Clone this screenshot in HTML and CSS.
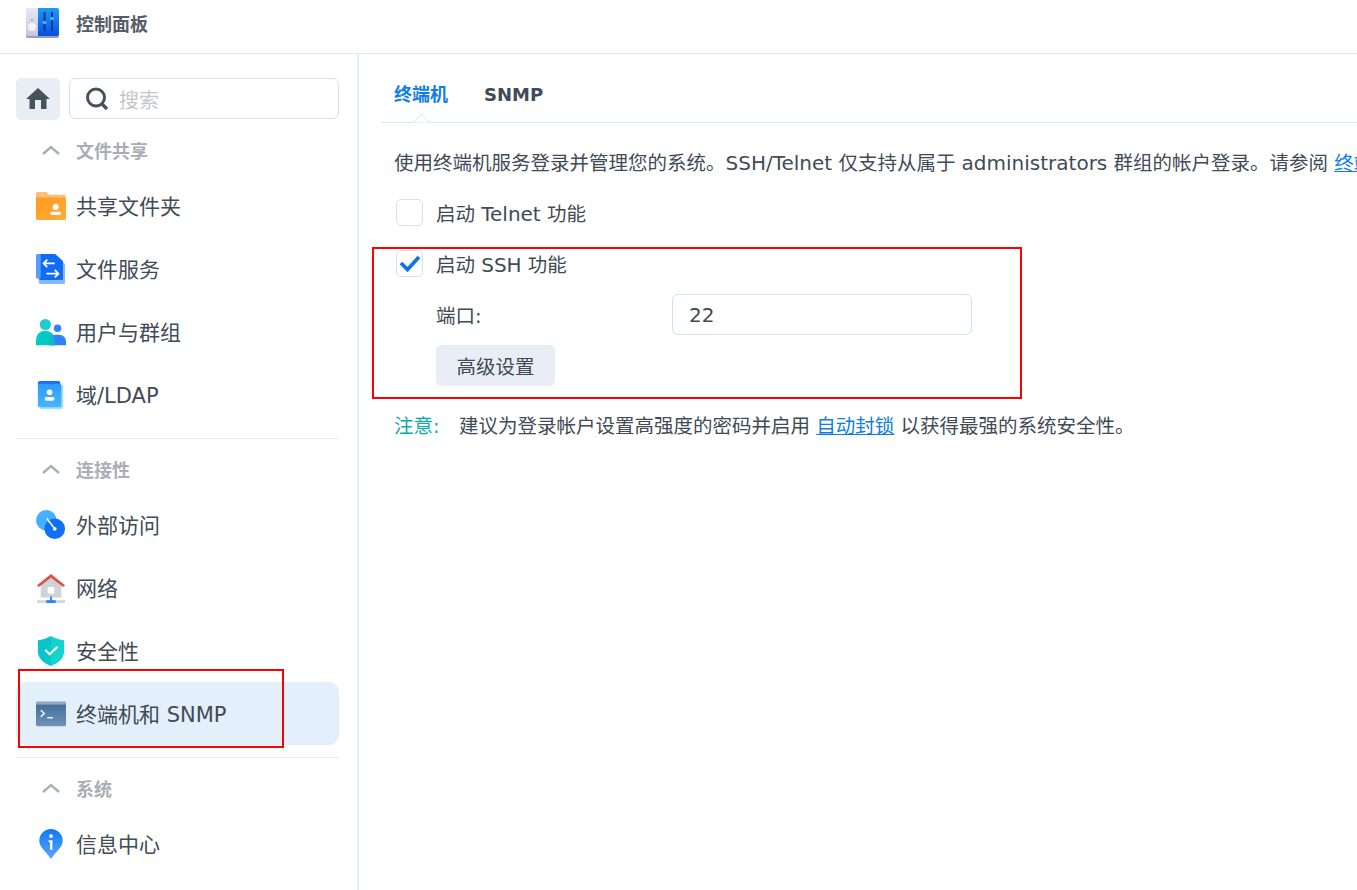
FILE: index.html
```html
<!DOCTYPE html>
<html lang="zh-CN">
<head>
  <meta charset="UTF-8" />
  <meta name="viewport" content="width=device-width, initial-scale=1.0" />
  <title>控制面板</title>
  <link rel="stylesheet" href="styles.css">
</head>
<body>
  <div class="window">
    <header class="titlebar">
      <svg class="app-icon" viewBox="0 0 34 31">
        <defs>
          <linearGradient id="appLeft" x1="0" y1="0" x2="0" y2="1"><stop offset="0" stop-color="#e6e8f6"/><stop offset="1" stop-color="#c4c6de"/></linearGradient>
          <linearGradient id="appRight" x1="0" y1="0" x2="0" y2="1"><stop offset="0" stop-color="#1e9bf5"/><stop offset="1" stop-color="#0b4fe0"/></linearGradient>
        </defs>
        <rect x="0" y="1" width="33" height="29" rx="2" fill="#9a9cb0"/>
        <path d="M2 0h10v28H2a2 2 0 0 1-2-2V2a2 2 0 0 1 2-2z" fill="url(#appLeft)"/>
        <path d="M12 0h19a2 2 0 0 1 2 2v24a2 2 0 0 1-2 2H12z" fill="url(#appRight)"/>
        <circle cx="6" cy="19" r="4" fill="#f4f4fa"/>
        <circle cx="6" cy="12" r=".8" fill="#7d7f99"/>
        <path d="M18.5 4v19M26 4v19" stroke="#0a3a9a" stroke-width="2"/>
        <rect x="16.5" y="13" width="4" height="3" rx="1" fill="#3fb0f7"/>
        <rect x="24" y="9" width="4" height="3" rx="1" fill="#3fb0f7"/>
      </svg>
      <span class="app-title">控制面板</span>
    </header>

    <div class="layout">
      <aside class="sidebar">
        <div class="search-row">
          <button class="home-btn" type="button">
            <svg width="26" height="24" viewBox="0 0 26 24"><path d="M13 1 1 12h3.500v10h17V12H25z" fill="#47525e"/><rect x="10" y="13" width="6" height="9" fill="#e9edf4"/></svg>
          </button>
          <div class="search-box">
            <svg width="24" height="26" viewBox="0 0 24 26"><circle cx="11" cy="11.500" r="8.500" fill="none" stroke="#47525e" stroke-width="3"/><path d="m17 18 5 5" stroke="#47525e" stroke-width="3.200"/></svg>
            <span class="placeholder">搜索</span>
          </div>
        </div>

        <div class="group-title first">
          <svg class="chevron" width="18" height="10" viewBox="0 0 18 10"><path d="M1 9l8-7 8 7" fill="none" stroke="#a9aeb4" stroke-width="2.400"/></svg>
          <span>文件共享</span>
        </div>
        <a class="nav-item">
          <svg class="nav-icon" viewBox="0 0 32 30">
            <defs><linearGradient id="folder" x1="0" y1="0" x2="1" y2="1"><stop offset="0" stop-color="#ff9a1f"/><stop offset="1" stop-color="#ffad38"/></linearGradient></defs>
            <path d="M0 2a2 2 0 0 1 2-2h9l3 3h16a2 2 0 0 1 2 2v4H0z" fill="#ffbe75"/>
            <path d="M0 6h30a2 2 0 0 1 2 2v20a2 2 0 0 1-2 2H2a2 2 0 0 1-2-2z" fill="url(#folder)"/>
            <circle cx="21" cy="16" r="3.200" fill="#fff"/>
            <rect x="15.500" y="21" width="11" height="3.500" rx="1.500" fill="#fff"/>
          </svg>
          <span>共享文件夹</span>
        </a>
        <a class="nav-item">
          <svg class="nav-icon" viewBox="0 0 32 32">
            <path d="M3 3h20l8 8v19a2 2 0 0 1-2 2H5a2 2 0 0 1-2-2z" fill="#8ab8ff"/>
            <path d="M2 0h17l9 8v21a1 1 0 0 1-1 1H2a2 2 0 0 1-2-2V2a2 2 0 0 1 2-2z" fill="#0f6cf5" transform="translate(3 0) scale(.92)"/>
            <path d="M0 1.500a1.500 1.500 0 0 1 1.500-1.500H5v26H0z" fill="#5b9dfb"/>
            <path d="M20 10H8m4-4-4 4 4 4M11 21h13m-4-4 4 4-4 4" fill="none" stroke="#fff" stroke-width="1.800"/>
          </svg>
          <span>文件服务</span>
        </a>
        <a class="nav-item">
          <svg class="nav-icon" viewBox="0 0 32 28">
            <circle cx="10" cy="6" r="6" fill="#1ecdd0"/>
            <path d="M0 28v-6a9 9 0 0 1 9-9h2a9 9 0 0 1 9 9v6z" fill="#05c8c5"/>
            <circle cx="23" cy="10" r="4" fill="#2f82fb"/>
            <path d="M14 28v-4a7 7 0 0 1 7-7h4a7 7 0 0 1 7 7v4z" fill="#2f82fb"/>
            <path d="M14 28v-4a7 7 0 0 1 3.200-5.900A9 9 0 0 1 20 22v6z" fill="#07bcc4"/>
          </svg>
          <span>用户与群组</span>
        </a>
        <a class="nav-item">
          <svg class="nav-icon" viewBox="0 0 32 30">
            <defs><linearGradient id="domain" x1="0" y1="0" x2="0" y2="1"><stop offset="0" stop-color="#2f9bff"/><stop offset="1" stop-color="#45b6ff"/></linearGradient></defs>
            <path d="M2 0h20a2 2 0 0 1 2 2v4H0V2a2 2 0 0 1 2-2z" fill="#1a6ff5" transform="translate(2 0)"/>
            <rect x="4" y="4" width="25" height="26" rx="2" fill="#a6dcff"/>
            <rect x="2" y="3" width="25" height="25" rx="2" fill="url(#domain)"/>
            <circle cx="14.500" cy="12" r="3" fill="#fff"/>
            <rect x="9.500" y="17" width="10" height="4" rx="1.500" fill="#fff"/>
          </svg>
          <span>域/LDAP</span>
        </a>

        <div class="divider"></div>

        <div class="group-title">
          <svg class="chevron" width="18" height="10" viewBox="0 0 18 10"><path d="M1 9l8-7 8 7" fill="none" stroke="#a9aeb4" stroke-width="2.400"/></svg>
          <span>连接性</span>
        </div>
        <a class="nav-item">
          <svg class="nav-icon" viewBox="0 0 32 32">
            <circle cx="11" cy="11" r="11" fill="#45b0ff"/>
            <circle cx="20" cy="20" r="11" fill="#0f6ff5"/>
            <path d="M11.500 9 20 20" stroke="#fff" stroke-width="1.600"/>
            <circle cx="20" cy="20" r="2" fill="#fff"/>
          </svg>
          <span>外部访问</span>
        </a>
        <a class="nav-item">
          <svg class="nav-icon" viewBox="0 0 32 32">
            <path d="M5 13 16 4l11 9v13H5z" fill="#cfd3d8"/>
            <path d="M1 13 16 1l15 12-2 2L16 5 3 15z" fill="#d9534f"/>
            <rect x="12.500" y="15" width="7" height="7" fill="#fff"/>
            <rect x="1" y="29" width="30" height="3" fill="#d3d7db"/>
            <rect x="11" y="29" width="10" height="3" fill="#2f82fb"/>
            <rect x="15" y="25" width="2" height="5" fill="#2f82fb"/>
          </svg>
          <span>网络</span>
        </a>
        <a class="nav-item">
          <svg class="nav-icon" viewBox="0 0 32 32">
            <defs><linearGradient id="shield" x1="0" y1="0" x2="1" y2="0"><stop offset="0" stop-color="#07c5c8"/><stop offset=".5" stop-color="#07c5c8"/><stop offset=".5" stop-color="#14d2d0"/><stop offset="1" stop-color="#14d2d0"/></linearGradient></defs>
            <path d="M16 0c4 2.500 9 4 14 4.500V16c0 8-6 13-14 16C8 29 2 24 2 16V4.500C7 4 12 2.500 16 0z" fill="url(#shield)"/>
            <path d="m10 15 4.500 4.500L23 11.500" fill="none" stroke="#fff" stroke-width="2.200"/>
          </svg>
          <span>安全性</span>
        </a>
        <a class="nav-item active">
          <svg class="nav-icon" viewBox="0 0 32 26">
            <defs><linearGradient id="term" x1="0" y1="0" x2="0" y2="1"><stop offset="0" stop-color="#3f6a95"/><stop offset="1" stop-color="#6f93b8"/></linearGradient></defs>
            <rect width="32" height="26" rx="1.500" fill="url(#term)"/>
            <rect width="32" height="3" fill="#8fa9c4"/>
            <path d="m5 9 4 3.500L5 16" fill="none" stroke="#fff" stroke-width="1.400"/>
            <path d="M12 17h6" stroke="#fff" stroke-width="1.400"/>
          </svg>
          <span>终端机和 SNMP</span>
        </a>

        <div class="divider"></div>

        <div class="group-title">
          <svg class="chevron" width="18" height="10" viewBox="0 0 18 10"><path d="M1 9l8-7 8 7" fill="none" stroke="#a9aeb4" stroke-width="2.400"/></svg>
          <span>系统</span>
        </div>
        <a class="nav-item">
          <svg class="nav-icon" viewBox="0 0 32 32">
            <defs><linearGradient id="info" x1="0" y1="0" x2="0" y2="1"><stop offset="0" stop-color="#0f7af5"/><stop offset="1" stop-color="#5aa5fb"/></linearGradient></defs>
            <path d="M16 0c7 0 12.500 5.500 12.500 12.500 0 7-6 10-12.500 19.500C9.500 22.500 3.500 19.500 3.500 12.500 3.500 5.500 9 0 16 0z" fill="url(#info)"/>
            <circle cx="16" cy="7.500" r="2" fill="#fff"/>
            <path d="M13.500 12H17.500V22H15V14H13.500z" fill="#fff"/>
          </svg>
          <span>信息中心</span>
        </a>
      </aside>

      <main class="content">
        <nav class="tabs">
          <a class="tab current">终端机</a>
          <a class="tab">SNMP</a>
        </nav>

        <p class="intro">使用终端机服务登录并管理您的系统。<span class="latin">SSH/Telnet</span> 仅支持从属于 <span class="latin">administrators</span> 群组的帐户登录。请参阅 <a class="link">终端机服务</a></p>

        <label class="check-row telnet">
          <span class="checkbox"></span>
          <span>启动 <span class="latin">Telnet</span> 功能</span>
        </label>

        <label class="check-row ssh">
          <span class="checkbox">
            <svg width="24" height="20" viewBox="0 0 24 20"><path d="m3 10 6.500 6.500L21 4" fill="none" stroke="#0f76e8" stroke-width="3.800"/></svg>
          </span>
          <span>启动 <span class="latin">SSH</span> 功能</span>
        </label>

        <div class="form-row">
          <span class="form-label">端口:</span>
          <input class="text-input" type="text" value="22">
        </div>

        <button class="plain-btn" type="button">高级设置</button>

        <p class="note"><span class="note-tag">注意:</span>建议为登录帐户设置高强度的密码并启用 <a class="link">自动封锁</a> 以获得最强的系统安全性。</p>
      </main>
    </div>

    <!-- red marks drawn over the screenshot -->
    <div class="mark mark-nav"></div>
    <div class="mark mark-ssh"></div>
  </div>
</body>
</html>
```

FILE: styles.css
```css
html, body {
  margin: 0;
  padding: 0;
  height: 100%;
}

*, *::before, *::after {
  box-sizing: border-box;
}

body {
  background: #fff;
  color: #414b55;
  font-family: "DejaVu Sans", "Noto Sans CJK SC", sans-serif;
  overflow: hidden;
}

.window {
  position: relative;
  height: 890px;
  overflow: hidden;
}

.titlebar {
  display: flex;
  align-items: center;
  height: 54px;
  padding: 0 0 7px 26px;
  border-bottom: 1px solid #e3e8ef;
}

.app-icon {
  width: 34px;
  height: 31px;
  margin-right: 16px;
}

.app-title {
  font-size: 18px;
  font-weight: 700;
  color: #555d66;
}

.layout {
  display: flex;
  height: 836px;
}

.sidebar {
  width: 359px;
  flex: none;
  padding: 24px 18px 0 16px;
  border-right: 2px solid #e9eef5;
}

.search-row {
  display: flex;
  gap: 9px;
}

.home-btn {
  display: flex;
  align-items: center;
  justify-content: center;
  width: 44px;
  height: 42px;
  padding: 0;
  border: none;
  border-radius: 5px;
  background: #e9edf4;
}

.search-box {
  display: flex;
  align-items: center;
  flex: 1;
  height: 41px;
  padding-left: 15px;
  border: 1px solid #d8e1ea;
  border-radius: 6px;
}

.placeholder {
  margin: 2px 0 0 10px;
  font-size: 20px;
  color: #c3c7cb;
}

.group-title {
  display: flex;
  align-items: center;
  height: 36px;
  margin-top: 12px;
  padding-left: 26px;
  font-size: 18px;
  font-weight: 700;
  color: #a9aeb4;
}

.chevron {
  margin-right: 16px;
}

.nav-item {
  display: flex;
  align-items: center;
  height: 63px;
  padding-left: 20px;
  border-radius: 10px;
  font-size: 21px;
  color: #414b55;
}

.nav-item span {
  margin-bottom: 2px;
}

.group-title + .nav-item {
  margin-top: 6px;
}

.nav-item.active {
  background: #e3effb;
}

.nav-icon {
  width: 30px;
  height: 30px;
  margin-right: 10px;
  flex: none;
}

.divider {
  height: 1px;
  margin-top: 12px;
  background: #e9edf2;
}

.content {
  flex: 1;
  min-width: 0;
  padding-left: 23px;
  overflow: hidden;
}

.tabs {
  position: relative;
  display: flex;
  gap: 36px;
  height: 69px;
  padding: 27px 0 0 12px;
  border-bottom: 1px solid #d9e3ee;
}

/* little notch under the current tab */
.tabs::after {
  content: "";
  position: absolute;
  left: 33px;
  bottom: -7px;
  width: 13px;
  height: 13px;
  background: #fff;
  border-top: 1px solid #d9e3ee;
  border-left: 1px solid #d9e3ee;
  transform: rotate(45deg);
  clip-path: polygon(0 0, 100% 0, 0 100%);
}

.tab {
  font-size: 18px;
  line-height: 28px;
  font-weight: 700;
  color: #414b55;
}

.tab.current {
  color: #0f7de8;
}

.intro {
  margin: 26px 0 0 12px;
  font-size: 19.5px;
  line-height: 28px;
  white-space: nowrap;
}

.latin {
  font-size: 20px;
}

.link {
  color: #0f7de8;
  text-decoration: underline;
}

.check-row {
  display: flex;
  align-items: center;
  gap: 13px;
  height: 28px;
  margin-left: 14px;
  font-size: 19.5px;
}

.check-row.telnet {
  margin-top: 20px;
}

.check-row.ssh {
  margin-top: 23px;
}

.checkbox {
  display: flex;
  align-items: center;
  justify-content: center;
  width: 27px;
  height: 27px;
  border: 1px solid #d8e1ea;
  border-radius: 5px;
  background: #fff;
}

.form-row {
  display: flex;
  align-items: center;
  margin: 17px 0 0 54px;
}

.form-label {
  width: 236px;
  font-size: 19.5px;
}

.text-input {
  width: 300px;
  height: 41px;
  padding: 1px 16px 0;
  border: 1px solid #d8e1ea;
  border-radius: 6px;
  background: #fff;
  color: #414b55;
  font: inherit;
  font-size: 20px;
}

.plain-btn {
  display: block;
  width: 119px;
  height: 41px;
  margin: 10px 0 0 54px;
  padding: 0;
  border: none;
  border-radius: 5px;
  background: #e9edf4;
  color: #414b55;
  font: inherit;
  font-size: 19.5px;
}

.note {
  margin: 27px 0 0 12px;
  font-size: 19.5px;
  line-height: 28px;
  white-space: nowrap;
}

.note-tag {
  display: inline-block;
  width: 65px;
  color: #08adaa;
}

.mark {
  position: absolute;
  border: 2px solid #f00;
  pointer-events: none;
}

.mark-nav {
  left: 18px;
  top: 669px;
  width: 266px;
  height: 79px;
}

.mark-ssh {
  left: 372px;
  top: 247px;
  width: 650px;
  height: 152px;
}
```
